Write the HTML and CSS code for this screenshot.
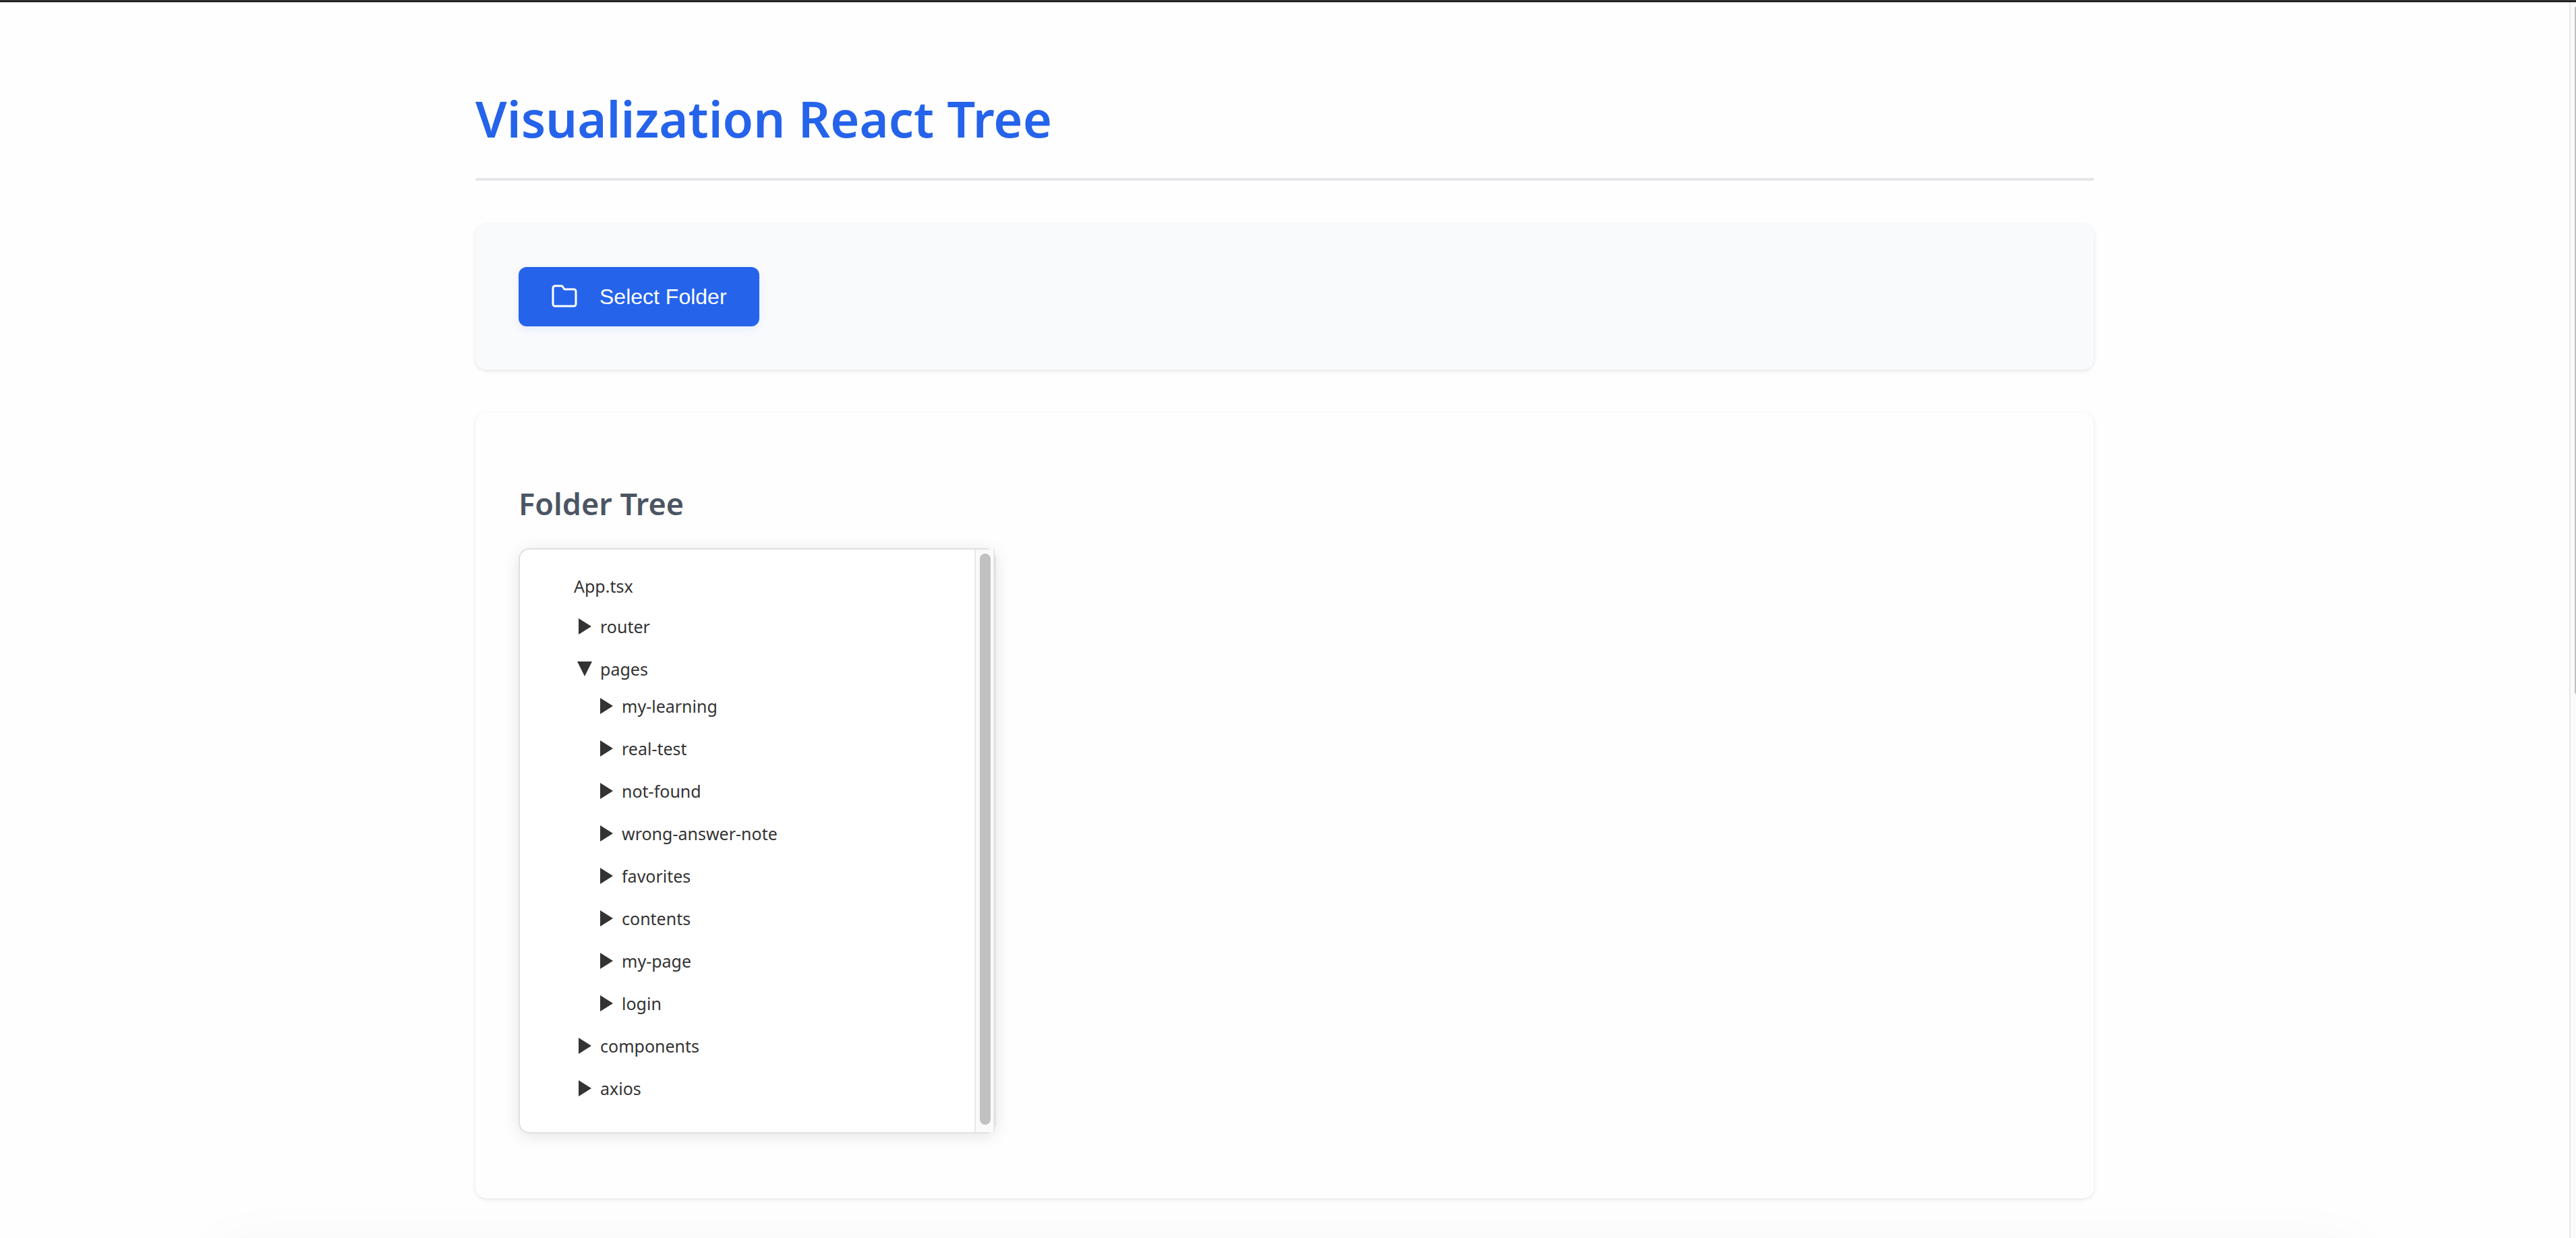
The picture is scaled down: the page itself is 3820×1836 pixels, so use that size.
FILE: index.html
```html
<!DOCTYPE html>
<html lang="en">
<head>
<meta charset="utf-8">
<title>Visualization React Tree</title>
<link rel="stylesheet" href="styles.css">
</head>
<body>
<svg class="defs" aria-hidden="true">
  <symbol id="closed" viewBox="0 0 24 24"><path d="M2 0 21 12 2 24Z"/></symbol>
  <symbol id="open" viewBox="0 0 24 24"><path d="M0 1H22L11 23Z"/></symbol>
</svg>
<div class="window-edge"></div>
<div class="viewport">
  <main class="page">
    <div class="container">
      <header class="header">
        <h1 class="title">Visualization React Tree</h1>
      </header>
      <section class="card card-tinted">
        <button class="select-button" type="button">
          <svg class="folder-icon" viewBox="0 0 40 40" aria-hidden="true"><path d="M3 8V31a3 3 0 0 0 3 3H34A3 3 0 0 0 37 31V12A3 3 0 0 0 34 9H20L18 6A3 3 0 0 0 15 4H6A3 3 0 0 0 3 7Z"/></svg>
          <span>Select Folder</span>
        </button>
      </section>
      <section class="card">
        <h2 class="subtitle">Folder Tree</h2>
        <div class="panel">
          <ul class="tree">
            <li class="leaf">App.tsx</li>
            <li><button class="node" type="button" aria-expanded="false"><svg class="arrow"><use href="#closed"/></svg>router</button></li>
            <li><button class="node" type="button" aria-expanded="true"><svg class="arrow"><use href="#open"/></svg>pages</button>
              <ul class="branch">
                <li><button class="node" type="button" aria-expanded="false"><svg class="arrow"><use href="#closed"/></svg>my-learning</button></li>
                <li><button class="node" type="button" aria-expanded="false"><svg class="arrow"><use href="#closed"/></svg>real-test</button></li>
                <li><button class="node" type="button" aria-expanded="false"><svg class="arrow"><use href="#closed"/></svg>not-found</button></li>
                <li><button class="node" type="button" aria-expanded="false"><svg class="arrow"><use href="#closed"/></svg>wrong-answer-note</button></li>
                <li><button class="node" type="button" aria-expanded="false"><svg class="arrow"><use href="#closed"/></svg>favorites</button></li>
                <li><button class="node" type="button" aria-expanded="false"><svg class="arrow"><use href="#closed"/></svg>contents</button></li>
                <li><button class="node" type="button" aria-expanded="false"><svg class="arrow"><use href="#closed"/></svg>my-page</button></li>
                <li><button class="node" type="button" aria-expanded="false"><svg class="arrow"><use href="#closed"/></svg>login</button></li>
              </ul>
            </li>
            <li><button class="node" type="button" aria-expanded="false"><svg class="arrow"><use href="#closed"/></svg>components</button></li>
            <li><button class="node" type="button" aria-expanded="false"><svg class="arrow"><use href="#closed"/></svg>axios</button></li>
          </ul>
          <div class="track"><div class="thumb"></div></div>
        </div>
      </section>
    </div>
  </main>
  <div class="page-track"><div class="page-thumb"></div></div>
</div>
<div class="dock-shadow"></div>
</body>
</html>
```
FILE: styles.css
```css
* { box-sizing: border-box; }

body {
  margin: 0;
  height: 100vh;
  display: flex;
  flex-direction: column;
  overflow: hidden;
  background: #fefefe;
  color: #333;
  font-family: "Noto Sans", "Open Sans", sans-serif;
}

.defs { display: none; }

.window-edge {
  flex: none;
  height: 4px;
  background: #333;
  border-bottom: 1px solid #c4c8c4;
  box-shadow: inset 0 -1px #000;
}

.viewport { flex: 1; display: flex; min-height: 0; }

.page { flex: 1; min-width: 0; overflow: hidden; padding: 124px 64px 64px; }

.container { max-width: 2400px; margin: 0 auto; }

.header {
  padding-bottom: 40px;
  margin-bottom: 64px;
  border-bottom: 4px solid #e5e7eb;
}

.title {
  margin: 0;
  color: #2563eb;
  font-size: 74px;
  line-height: 96px;
  font-weight: 600;
}

.card {
  padding: 64px;
  margin-bottom: 64px;
  border-radius: 16px;
  background: #fefefe;
  box-shadow: 0 2px 6px rgba(0, 0, 0, .1);
}

.card-tinted { background: #f9fafc; }

.select-button {
  display: flex;
  align-items: center;
  gap: 32px;
  height: 88px;
  padding: 0 48px;
  border: 0;
  border-radius: 12px;
  background: #2563eb;
  color: #fff;
  font: 500 32px/40px "Liberation Sans", Arial, sans-serif;
  box-shadow: 0 4px 12px rgba(37, 99, 235, .1);
  cursor: pointer;
}

.folder-icon {
  width: 40px;
  height: 40px;
  fill: none;
  stroke: #fff;
  stroke-width: 3;
  stroke-linejoin: round;
}

.subtitle {
  margin: 42px 0 37px;
  color: #4b5563;
  font-size: 45px;
  line-height: 58px;
  font-weight: 600;
}

.panel {
  display: flex;
  width: 100%;
  max-width: 708px;
  margin-bottom: 32px;
  border: 2px solid #e0e0e0;
  border-radius: 16px;
  background: #fff;
  box-shadow: 0 4px 24px rgba(0, 0, 0, .1);
}

.tree, .branch {
  display: flex;
  flex-direction: column;
  gap: 8px;
  margin: 0;
  list-style: none;
}

.tree { flex: 1; padding: 29px 0 38px 80px; font-size: 25px; line-height: 36px; }
.branch { padding-left: 32px; }

.leaf { display: flex; align-items: center; height: 49px; }

.node {
  display: flex;
  align-items: center;
  gap: 10px;
  height: 55px;
  padding: 0 5px;
  border: 0;
  background: none;
  color: inherit;
  font: inherit;
  cursor: pointer;
}

.arrow { width: 24px; height: 24px; fill: #333; }

.track {
  width: 30px;
  padding: 6px 4px 11px 6px;
  border: solid #e8e8e8;
  border-width: 0 2px;
  background: #fafafa;
}

.thumb { width: 16px; height: 100%; border-radius: 8px; background: #c1c1c1; }

.page-track {
  flex: none;
  width: 10px;
  padding: 6px 0 0 6px;
  border-left: 2px solid #e8e8e8;
  background: #fafafa;
}

.page-thumb { height: 55.8%; border-radius: 8px 0 0 8px; background: #c1c1c1; }

/* Soft shade cast upwards by the bar below the window */
.dock-shadow {
  position: fixed;
  left: 8%;
  right: 8%;
  top: 100%;
  height: 120px;
  border-radius: 60px;
  box-shadow: 0 12px 90px rgba(0, 0, 0, .04);
  pointer-events: none;
}
```
